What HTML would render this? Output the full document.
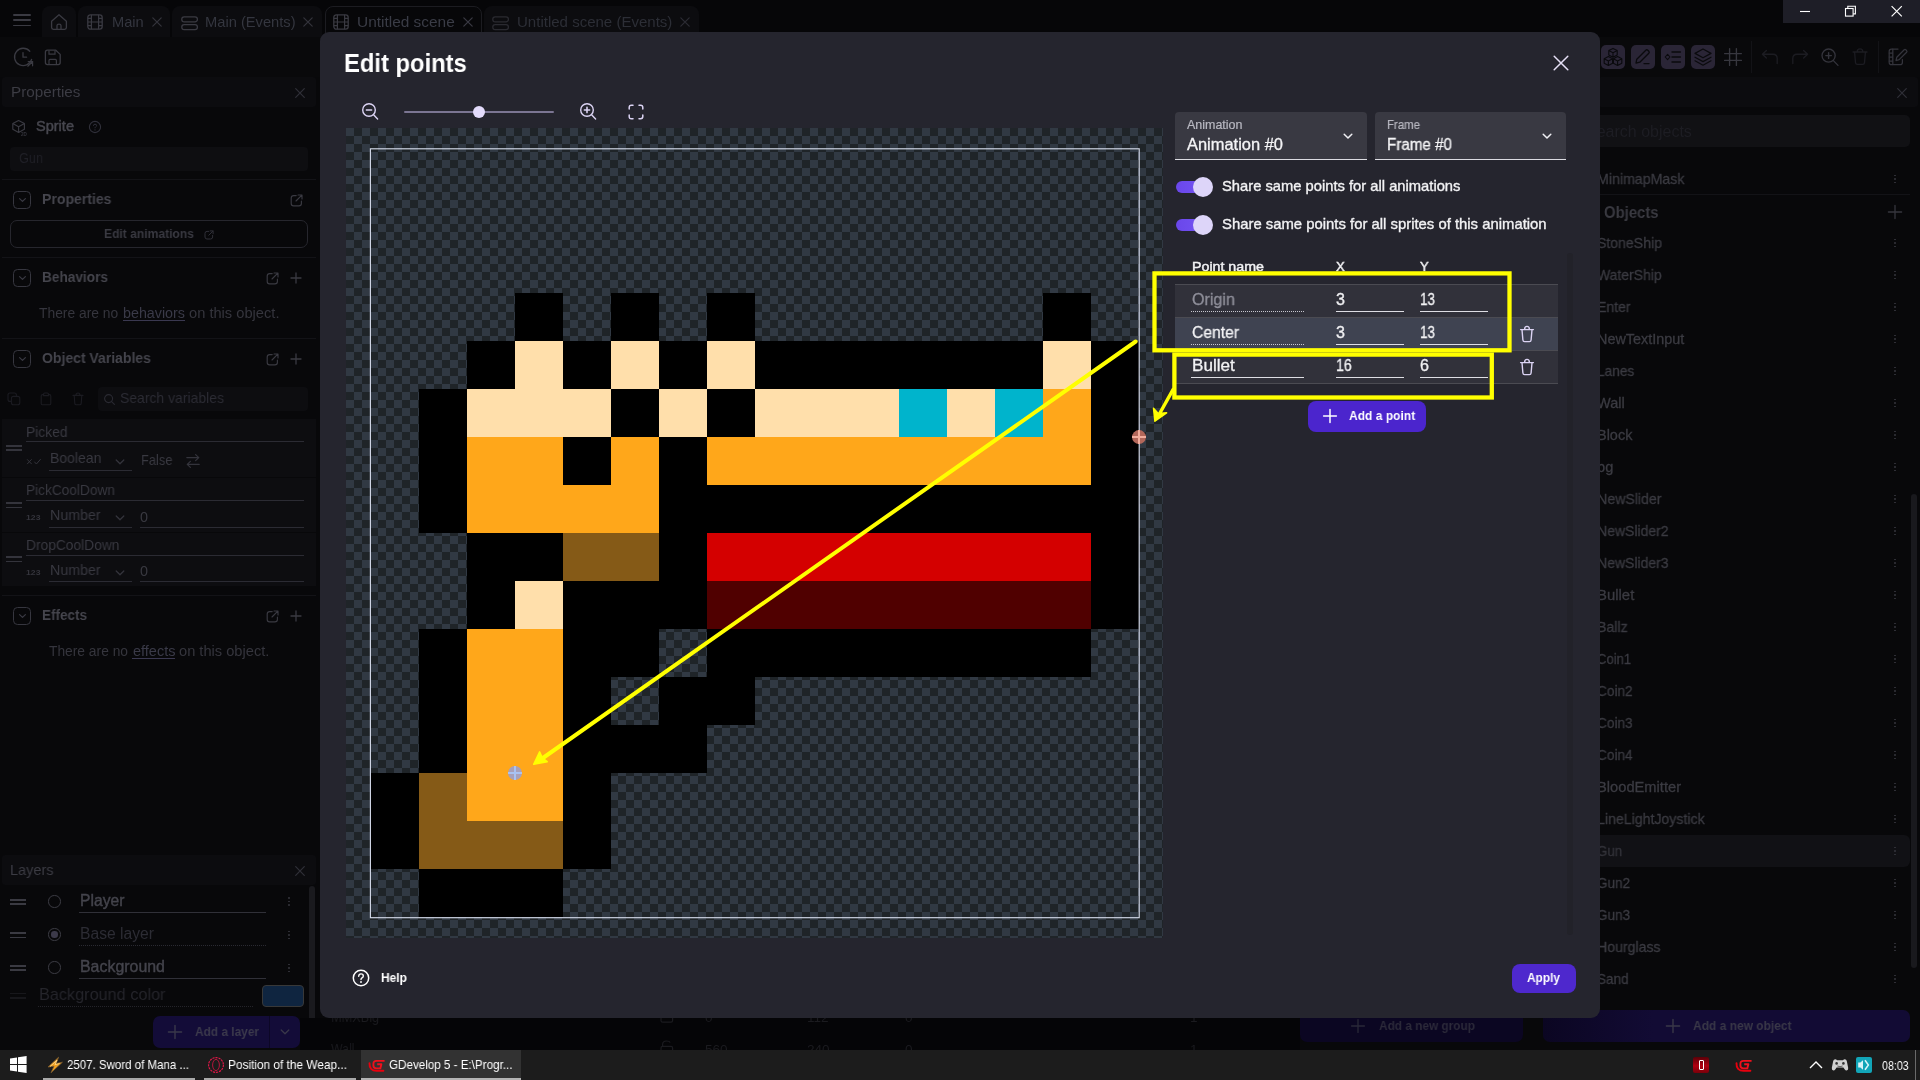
<!DOCTYPE html>
<html><head><meta charset="utf-8"><title>GDevelop 5</title>
<style>
html,body{margin:0;padding:0;}
body{width:1920px;height:1080px;overflow:hidden;background:#08080a;position:relative;font-family:"Liberation Sans",sans-serif;}
.a{position:absolute;display:block;}
.t{position:absolute;display:block;white-space:nowrap;line-height:1;transform-origin:0 50%;will-change:transform;}
</style></head>
<body>
<div class="a" style="left:0px;top:0px;width:1920px;height:38px;background:#060608;"></div>
<div class="a" style="left:0px;top:37px;width:1920px;height:40px;background:#09090b;"></div>
<div class="a" style="left:13px;top:14.0px;width:18px;height:1.5px;background:#3a3a42;border-radius:1px;"></div>
<div class="a" style="left:13px;top:19.4px;width:18px;height:1.5px;background:#3a3a42;border-radius:1px;"></div>
<div class="a" style="left:13px;top:24.6px;width:18px;height:1.5px;background:#3a3a42;border-radius:1px;"></div>
<div class="a" style="left:42px;top:6px;width:34px;height:31px;background:#0c0c0f;border-radius:8px 8px 0 0;"></div>
<div class="a" style="left:78px;top:6px;width:92px;height:31px;background:#0c0c0f;border-radius:8px 8px 0 0;"></div>
<div class="a" style="left:172px;top:6px;width:150px;height:31px;background:#0c0c0f;border-radius:8px 8px 0 0;"></div>
<div class="a" style="left:324.5px;top:6px;width:157px;height:34px;background:#070709;border-radius:8px 8px 0 0;border:1px solid #1c1c21;box-sizing:border-box;"></div>
<div class="a" style="left:483.5px;top:6px;width:215px;height:31px;background:#0c0c0f;border-radius:8px 8px 0 0;"></div>
<svg class="a" style="left:50px;top:13px;" width="18" height="18" viewBox="0 0 18 18"><path d="M1.6 8.2L9 1.8L16.4 8.2V14.6Q16.4 16.4 14.6 16.4H3.4Q1.6 16.4 1.6 14.6Z" fill="none" stroke="#3a3a42" stroke-width="1.3" stroke-linejoin="round"/><path d="M7 16.2V12.6Q7 11.2 9 11.2Q11 11.2 11 12.6V16.2" fill="none" stroke="#3a3a42" stroke-width="1.3"/></svg>
<svg class="a" style="left:87px;top:14.3px;" width="16" height="16" viewBox="0 0 16 16"><rect x="0.8" y="0.8" width="14.4" height="14.4" rx="2.6" fill="none" stroke="#3a3a42" stroke-width="1.3"/><path d="M4.4 0.8V15.2M11.6 0.8V15.2M0.8 8H15.2M0.8 4.4H4.4M0.8 11.6H4.4M11.6 4.4H15.2M11.6 11.6H15.2" stroke="#3a3a42" stroke-width="1.2" fill="none"/></svg>
<span class="t" style="left:111.60px;top:15.00px;font-size:14.2px;color:#34363f;transform:scaleX(1.0332);">Main</span>
<svg class="a" style="left:148.6px;top:14.399999999999999px;" width="16" height="16" viewBox="0 0 16 16"><path d="M3.8 3.8L12.2 12.2M12.2 3.8L3.8 12.2" stroke="#34343c" stroke-width="1.2" stroke-linecap="round"/></svg>
<svg class="a" style="left:181px;top:15.6px;" width="18" height="15" viewBox="0 0 18 15"><rect x="0.8" y="0.8" width="15.6" height="5" rx="2.4" fill="none" stroke="#3a3a42" stroke-width="1.3"/><rect x="0.8" y="8.6" width="15.6" height="5" rx="2.4" fill="none" stroke="#3a3a42" stroke-width="1.3"/></svg>
<span class="t" style="left:205.30px;top:15.00px;font-size:14.2px;color:#34363f;transform:scaleX(1.0343);">Main (Events)</span>
<svg class="a" style="left:300.4px;top:14.399999999999999px;" width="16" height="16" viewBox="0 0 16 16"><path d="M3.8 3.8L12.2 12.2M12.2 3.8L3.8 12.2" stroke="#34343c" stroke-width="1.2" stroke-linecap="round"/></svg>
<svg class="a" style="left:333px;top:14.3px;" width="16" height="16" viewBox="0 0 16 16"><rect x="0.8" y="0.8" width="14.4" height="14.4" rx="2.6" fill="none" stroke="#3a3a42" stroke-width="1.3"/><path d="M4.4 0.8V15.2M11.6 0.8V15.2M0.8 8H15.2M0.8 4.4H4.4M0.8 11.6H4.4M11.6 4.4H15.2M11.6 11.6H15.2" stroke="#3a3a42" stroke-width="1.2" fill="none"/></svg>
<span class="t" style="left:357.00px;top:15.00px;font-size:14.2px;color:#3a3c46;transform:scaleX(1.0868);">Untitled scene</span>
<svg class="a" style="left:459.5px;top:14.2px;" width="16" height="16" viewBox="0 0 16 16"><path d="M3.8 3.8L12.2 12.2M12.2 3.8L3.8 12.2" stroke="#3a3a44" stroke-width="1.2" stroke-linecap="round"/></svg>
<svg class="a" style="left:492px;top:15.6px;" width="18" height="15" viewBox="0 0 18 15"><rect x="0.8" y="0.8" width="15.6" height="5" rx="2.4" fill="none" stroke="#2a2a30" stroke-width="1.3"/><rect x="0.8" y="8.6" width="15.6" height="5" rx="2.4" fill="none" stroke="#2a2a30" stroke-width="1.3"/></svg>
<span class="t" style="left:516.50px;top:15.00px;font-size:14.2px;color:#2c2e36;transform:scaleX(1.0592);">Untitled scene (Events)</span>
<svg class="a" style="left:676.6px;top:14.2px;" width="16" height="16" viewBox="0 0 16 16"><path d="M3.8 3.8L12.2 12.2M12.2 3.8L3.8 12.2" stroke="#2c2c34" stroke-width="1.2" stroke-linecap="round"/></svg>
<svg class="a" style="left:12px;top:46px;" width="24" height="22" viewBox="0 0 24 22"><path d="M19.6 13.4A8.7 8.7 0 1 1 17.8 5.2" fill="none" stroke="#3a3a42" stroke-width="1.3" stroke-linecap="round"/><path d="M11 6.6V11.2H14.6" fill="none" stroke="#3a3a42" stroke-width="1.3" stroke-linecap="round" stroke-linejoin="round"/><path d="M16.2 15.6H20.6V19.8M20.4 15.8L15.8 20.2" fill="none" stroke="#3a3a42" stroke-width="1.2" stroke-linecap="round"/></svg>
<svg class="a" style="left:44px;top:49px;" width="18" height="17" viewBox="0 0 18 17"><path d="M1.4 3.2Q1.4 1.2 3.4 1.2H11.8L16.2 5.4V13.6Q16.2 15.6 14.2 15.6H3.4Q1.4 15.6 1.4 13.6Z" fill="none" stroke="#3a3a42" stroke-width="1.3" stroke-linejoin="round"/><path d="M5 1.4V5.2H11V1.6M5 15.4V11.4Q5 10.4 6 10.4H11.4Q12.4 10.4 12.4 11.4V15.4" fill="none" stroke="#3a3a42" stroke-width="1.2"/></svg>
<div class="a" style="left:2px;top:77px;width:314px;height:30px;background:#0c0c0f;border-radius:3px;"></div>
<span class="t" style="left:10.50px;top:85.00px;font-size:14.4px;color:#3c3c44;transform:scaleX(1.0591);">Properties</span>
<svg class="a" style="left:292px;top:85px;" width="16" height="16" viewBox="0 0 16 16"><path d="M3.7 3.7L12.3 12.3M12.3 3.7L3.7 12.3" stroke="#303038" stroke-width="1.2" stroke-linecap="round"/></svg>
<svg class="a" style="left:11px;top:119px;" width="18" height="17" viewBox="0 0 18 17"><path d="M7.6 1.6L13.4 4.6V10.2L7.6 13.4L1.8 10.2V4.6ZM1.8 4.6L7.6 7.8L13.4 4.6M7.6 7.8V13.4" fill="none" stroke="#3a3a42" stroke-width="1.15" stroke-linejoin="round"/></svg>
<span class="t" style="left:20.50px;top:133.00px;font-size:4.6px;color:#34343c;font-weight:bold;">2D</span>
<span class="t" style="left:36.00px;top:119.00px;font-size:14.2px;color:#47474f;transform:scaleX(1.0244);-webkit-text-stroke:0.45px #47474f;">Sprite</span>
<svg class="a" style="left:88px;top:120px;" width="14" height="14" viewBox="0 0 14 14"><circle cx="7" cy="7" r="5.6" fill="none" stroke="#30303a" stroke-width="1.1"/><path d="M5.4 5.8Q5.5 4.2 7 4.2Q8.6 4.2 8.6 5.6Q8.6 6.4 7.7 6.9Q7 7.3 7 8.2" fill="none" stroke="#30303a" stroke-width="1"/><circle cx="7" cy="9.9" r="0.65" fill="#30303a"/></svg>
<div class="a" style="left:10px;top:147.3px;width:298px;height:23.4px;background:#0e0e11;border-radius:4px;"></div>
<span class="t" style="left:18.50px;top:151.00px;font-size:14.2px;color:#202027;transform:scaleX(0.8941);">Gun</span>
<div class="a" style="left:2px;top:179px;width:314px;height:1px;background:#131317;"></div>
<div class="a" style="left:13px;top:191px;width:18px;height:18px;border-radius:4.5px;border:1.3px solid #36363f;box-sizing:border-box;"></div>
<svg class="a" style="left:17.5px;top:196px;" width="9" height="8" viewBox="0 0 9 8"><path d="M1.6 2.6L4.5 5.4L7.4 2.6" fill="none" stroke="#3a3a44" stroke-width="1.2" stroke-linecap="round" stroke-linejoin="round"/></svg>
<span class="t" style="left:42.00px;top:192.00px;font-size:14.2px;color:#45454d;font-weight:bold;transform:scaleX(0.9895);">Properties</span>
<svg class="a" style="left:289.5px;top:193.5px;" width="13" height="13" viewBox="0 0 13 13"><path d="M6.2 1.6H3.6Q1.2 1.6 1.2 4V9.4Q1.2 11.8 3.6 11.8H9Q11.4 11.8 11.4 9.4V7" fill="none" stroke="#3a3a42" stroke-width="1.15" stroke-linecap="round"/><path d="M6 7L11.8 1.2M8 1H12V5" fill="none" stroke="#3a3a42" stroke-width="1.15" stroke-linecap="round" stroke-linejoin="round"/></svg>
<div class="a" style="left:10px;top:220.3px;width:298px;height:28px;border-radius:7px;border:1px solid #26262d;box-sizing:border-box;"></div>
<span class="t" style="left:103.50px;top:228.00px;font-size:12.6px;color:#3a3a42;font-weight:bold;transform:scaleX(0.9593);">Edit animations</span>
<svg class="a" style="left:203.8px;top:229.6px;" width="10" height="10" viewBox="0 0 10 10"><path d="M4.8 1.4H3Q1 1.4 1 3.4V7Q1 9 3 9H6.6Q8.6 9 8.6 7V5.4" fill="none" stroke="#303038" stroke-width="1" stroke-linecap="round"/><path d="M4.8 5.2L9 1M6.2 0.9H9.1V3.8" fill="none" stroke="#303038" stroke-width="1" stroke-linecap="round" stroke-linejoin="round"/></svg>
<div class="a" style="left:2px;top:257px;width:314px;height:1px;background:#131317;"></div>
<div class="a" style="left:13px;top:269.2px;width:18px;height:18px;border-radius:4.5px;border:1.3px solid #36363f;box-sizing:border-box;"></div>
<svg class="a" style="left:17.5px;top:274.2px;" width="9" height="8" viewBox="0 0 9 8"><path d="M1.6 2.6L4.5 5.4L7.4 2.6" fill="none" stroke="#3a3a44" stroke-width="1.2" stroke-linecap="round" stroke-linejoin="round"/></svg>
<span class="t" style="left:42.00px;top:270.00px;font-size:14.2px;color:#45454d;font-weight:bold;transform:scaleX(0.9612);">Behaviors</span>
<svg class="a" style="left:265.5px;top:271.5px;" width="13" height="13" viewBox="0 0 13 13"><path d="M6.2 1.6H3.6Q1.2 1.6 1.2 4V9.4Q1.2 11.8 3.6 11.8H9Q11.4 11.8 11.4 9.4V7" fill="none" stroke="#3a3a42" stroke-width="1.15" stroke-linecap="round"/><path d="M6 7L11.8 1.2M8 1H12V5" fill="none" stroke="#3a3a42" stroke-width="1.15" stroke-linecap="round" stroke-linejoin="round"/></svg>
<svg class="a" style="left:288px;top:270px;" width="16" height="16" viewBox="0 0 16 16"><path d="M8 3V13M3 8H13" stroke="#3a3a42" stroke-width="1.3" stroke-linecap="round"/></svg>
<span class="t" style="left:39.00px;top:307.00px;font-size:13.8px;color:#35353d;transform:scaleX(1.0035);">There are no</span>
<span class="t" style="left:122.70px;top:307.00px;font-size:13.8px;color:#3a3a48;transform:scaleX(1.0361);">behaviors</span>
<span class="t" style="left:188.70px;top:307.00px;font-size:13.8px;color:#35353d;transform:scaleX(1.0627);">on this object.</span>
<div class="a" style="left:122.5px;top:319.8px;width:62.5px;height:1px;background:#3a3850;"></div>
<div class="a" style="left:2px;top:338px;width:314px;height:1px;background:#131317;"></div>
<div class="a" style="left:13px;top:350.2px;width:18px;height:18px;border-radius:4.5px;border:1.3px solid #36363f;box-sizing:border-box;"></div>
<svg class="a" style="left:17.5px;top:355.2px;" width="9" height="8" viewBox="0 0 9 8"><path d="M1.6 2.6L4.5 5.4L7.4 2.6" fill="none" stroke="#3a3a44" stroke-width="1.2" stroke-linecap="round" stroke-linejoin="round"/></svg>
<span class="t" style="left:42.00px;top:351.00px;font-size:14.2px;color:#45454d;font-weight:bold;transform:scaleX(0.9863);">Object Variables</span>
<svg class="a" style="left:265.5px;top:352.5px;" width="13" height="13" viewBox="0 0 13 13"><path d="M6.2 1.6H3.6Q1.2 1.6 1.2 4V9.4Q1.2 11.8 3.6 11.8H9Q11.4 11.8 11.4 9.4V7" fill="none" stroke="#3a3a42" stroke-width="1.15" stroke-linecap="round"/><path d="M6 7L11.8 1.2M8 1H12V5" fill="none" stroke="#3a3a42" stroke-width="1.15" stroke-linecap="round" stroke-linejoin="round"/></svg>
<svg class="a" style="left:288px;top:351px;" width="16" height="16" viewBox="0 0 16 16"><path d="M8 3V13M3 8H13" stroke="#3a3a42" stroke-width="1.3" stroke-linecap="round"/></svg>
<svg class="a" style="left:7px;top:392px;" width="14" height="14" viewBox="0 0 14 14"><rect x="1" y="1" width="8.4" height="8.4" rx="2" fill="none" stroke="#1b1b21" stroke-width="1.1"/><rect x="4.4" y="4.4" width="8.4" height="8.4" rx="2" fill="#09090b" stroke="#1b1b21" stroke-width="1.1"/></svg>
<svg class="a" style="left:40px;top:392px;" width="12" height="14" viewBox="0 0 12 14"><path d="M3.4 2.6H2.6Q1.2 2.6 1.2 4V11.4Q1.2 12.8 2.6 12.8H9.4Q10.8 12.8 10.8 11.4V4Q10.8 2.6 9.4 2.6H8.6M3.6 3.6V2Q3.6 1 4.6 1H7.4Q8.4 1 8.4 2V3.6Z" fill="none" stroke="#1b1b21" stroke-width="1.1"/></svg>
<svg class="a" style="left:72px;top:392px;" width="12" height="14" viewBox="0 0 12 14"><path d="M1 3.4H11M4 3.2Q4 1 6 1Q8 1 8 3.2M2.2 3.6L2.8 11.4Q2.9 12.8 4.2 12.8H7.8Q9.1 12.8 9.2 11.4L9.8 3.6" fill="none" stroke="#1b1b21" stroke-width="1.1" stroke-linecap="round"/></svg>
<div class="a" style="left:98px;top:387.3px;width:210px;height:23.7px;background:#0d0d10;border-radius:4px;"></div>
<svg class="a" style="left:103px;top:393px;" width="13" height="13" viewBox="0 0 13 13"><circle cx="5.6" cy="5.6" r="4" fill="none" stroke="#2a2a32" stroke-width="1.1"/><path d="M8.6 8.6L11.4 11.4" stroke="#2a2a32" stroke-width="1.1" stroke-linecap="round"/></svg>
<span class="t" style="left:120.00px;top:391.00px;font-size:14.6px;color:#2c2c34;transform:scaleX(0.9565);">Search variables</span>
<div class="a" style="left:2px;top:419px;width:314px;height:58px;background:#0d0d10;"></div>
<div class="a" style="left:2px;top:478px;width:314px;height:54.4px;background:#0d0d10;"></div>
<div class="a" style="left:2px;top:533.3px;width:314px;height:53px;background:#0d0d10;"></div>
<span class="t" style="left:26.00px;top:425.00px;font-size:14.4px;color:#393941;transform:scaleX(0.9602);">Picked</span>
<div class="a" style="left:26px;top:441px;width:278px;height:1px;background:#2b2b33;"></div>
<div class="a" style="left:6px;top:445.1px;width:16px;height:1.5px;background:#34343c;"></div>
<div class="a" style="left:6px;top:449.3px;width:16px;height:1.5px;background:#34343c;"></div>
<svg class="a" style="left:25.5px;top:458px;" width="16" height="8" viewBox="0 0 16 8"><path d="M1.4 1.6L5.4 5.8M5.4 1.6L1.4 5.8M8.6 4L10.4 6L14.4 1.4" fill="none" stroke="#33333b" stroke-width="1" stroke-linecap="round" stroke-linejoin="round"/></svg>
<span class="t" style="left:49.50px;top:451.00px;font-size:14.4px;color:#393941;transform:scaleX(0.9746);">Boolean</span>
<svg class="a" style="left:114px;top:456.5px;" width="12" height="10" viewBox="0 0 12 10"><path d="M2.2 3L6 6.8L9.8 3" fill="none" stroke="#34343c" stroke-width="1.25" stroke-linecap="round" stroke-linejoin="round"/></svg>
<div class="a" style="left:49px;top:470px;width:83px;height:1px;background:#2b2b33;"></div>
<span class="t" style="left:140.50px;top:453.00px;font-size:14.4px;color:#393941;transform:scaleX(0.8947);">False</span>
<svg class="a" style="left:185px;top:453px;" width="16" height="16" viewBox="0 0 16 16"><path d="M1.8 4.6H13.6M10.6 1.6L13.8 4.6L10.6 7.6M14.2 11.4H2.4M5.4 8.4L2.2 11.4L5.4 14.4" fill="none" stroke="#34343c" stroke-width="1.2" stroke-linecap="round" stroke-linejoin="round"/></svg>
<span class="t" style="left:26.00px;top:483.00px;font-size:14.4px;color:#393941;transform:scaleX(0.9505);">PickCoolDown</span>
<div class="a" style="left:26px;top:499.9px;width:278px;height:1px;background:#2b2b33;"></div>
<div class="a" style="left:6px;top:502.1px;width:16px;height:1.5px;background:#34343c;"></div>
<div class="a" style="left:6px;top:506.6px;width:16px;height:1.5px;background:#34343c;"></div>
<span class="t" style="left:26.00px;top:514.00px;font-size:7.4px;color:#34343c;font-weight:bold;transform:scaleX(1.1742);">123</span>
<span class="t" style="left:49.50px;top:508.00px;font-size:14.4px;color:#393941;transform:scaleX(0.9861);">Number</span>
<svg class="a" style="left:114px;top:513.1px;" width="12" height="10" viewBox="0 0 12 10"><path d="M2.2 3L6 6.8L9.8 3" fill="none" stroke="#34343c" stroke-width="1.25" stroke-linecap="round" stroke-linejoin="round"/></svg>
<div class="a" style="left:49px;top:527px;width:83px;height:1px;background:#2b2b33;"></div>
<span class="t" style="left:140.00px;top:510.00px;font-size:14.4px;color:#393941;transform:scaleX(0.9991);">0</span>
<div class="a" style="left:140px;top:527px;width:164px;height:1px;background:#2b2b33;"></div>
<span class="t" style="left:26.00px;top:538.00px;font-size:14.4px;color:#393941;transform:scaleX(0.9576);">DropCoolDown</span>
<div class="a" style="left:26px;top:554.9px;width:278px;height:1px;background:#2b2b33;"></div>
<div class="a" style="left:6px;top:556.3px;width:16px;height:1.5px;background:#34343c;"></div>
<div class="a" style="left:6px;top:560.5999999999999px;width:16px;height:1.5px;background:#34343c;"></div>
<span class="t" style="left:26.00px;top:569.00px;font-size:7.4px;color:#34343c;font-weight:bold;transform:scaleX(1.1742);">123</span>
<span class="t" style="left:49.50px;top:563.00px;font-size:14.4px;color:#393941;transform:scaleX(0.9861);">Number</span>
<svg class="a" style="left:114px;top:568.1px;" width="12" height="10" viewBox="0 0 12 10"><path d="M2.2 3L6 6.8L9.8 3" fill="none" stroke="#34343c" stroke-width="1.25" stroke-linecap="round" stroke-linejoin="round"/></svg>
<div class="a" style="left:49px;top:581.2px;width:83px;height:1px;background:#2b2b33;"></div>
<span class="t" style="left:140.00px;top:564.00px;font-size:14.4px;color:#393941;transform:scaleX(0.9991);">0</span>
<div class="a" style="left:140px;top:581.2px;width:164px;height:1px;background:#2b2b33;"></div>
<div class="a" style="left:2px;top:595px;width:314px;height:1px;background:#131317;"></div>
<div class="a" style="left:13px;top:607px;width:18px;height:18px;border-radius:4.5px;border:1.3px solid #36363f;box-sizing:border-box;"></div>
<svg class="a" style="left:17.5px;top:612px;" width="9" height="8" viewBox="0 0 9 8"><path d="M1.6 2.6L4.5 5.4L7.4 2.6" fill="none" stroke="#3a3a44" stroke-width="1.2" stroke-linecap="round" stroke-linejoin="round"/></svg>
<span class="t" style="left:42.00px;top:608.00px;font-size:14.2px;color:#45454d;font-weight:bold;transform:scaleX(0.9503);">Effects</span>
<svg class="a" style="left:265.5px;top:609.5px;" width="13" height="13" viewBox="0 0 13 13"><path d="M6.2 1.6H3.6Q1.2 1.6 1.2 4V9.4Q1.2 11.8 3.6 11.8H9Q11.4 11.8 11.4 9.4V7" fill="none" stroke="#3a3a42" stroke-width="1.15" stroke-linecap="round"/><path d="M6 7L11.8 1.2M8 1H12V5" fill="none" stroke="#3a3a42" stroke-width="1.15" stroke-linecap="round" stroke-linejoin="round"/></svg>
<svg class="a" style="left:288px;top:608px;" width="16" height="16" viewBox="0 0 16 16"><path d="M8 3V13M3 8H13" stroke="#3a3a42" stroke-width="1.3" stroke-linecap="round"/></svg>
<span class="t" style="left:49.20px;top:645.00px;font-size:13.8px;color:#35353d;transform:scaleX(0.9972);">There are no</span>
<span class="t" style="left:132.50px;top:645.00px;font-size:13.8px;color:#3a3a48;transform:scaleX(1.0519);">effects</span>
<span class="t" style="left:178.80px;top:645.00px;font-size:13.8px;color:#35353d;transform:scaleX(1.0615);">on this object.</span>
<div class="a" style="left:132.3px;top:657.6px;width:43px;height:1px;background:#3a3850;"></div>
<div class="a" style="left:2px;top:854.6px;width:314px;height:30.4px;background:#0c0c0f;border-radius:3px;"></div>
<span class="t" style="left:10.00px;top:862.00px;font-size:15px;color:#3c3c44;transform:scaleX(0.9661);">Layers</span>
<svg class="a" style="left:292px;top:863px;" width="16" height="16" viewBox="0 0 16 16"><path d="M3.7 3.7L12.3 12.3M12.3 3.7L3.7 12.3" stroke="#303038" stroke-width="1.2" stroke-linecap="round"/></svg>
<div class="a" style="left:309.2px;top:886.4px;width:5.6px;height:156.4px;background:#1a1a1e;border-radius:3px;"></div>
<div class="a" style="left:10px;top:899.0px;width:16px;height:1.5px;background:#3a3a42;"></div>
<div class="a" style="left:10px;top:903.4px;width:16px;height:1.5px;background:#3a3a42;"></div>
<div class="a" style="left:48.3px;top:895.3px;width:12.4px;height:12.4px;border-radius:50%;border:1.2px solid #3a3a42;box-sizing:border-box;"></div>
<span class="t" style="left:79.50px;top:893.00px;font-size:15.6px;color:#44444c;transform:scaleX(1.0063);-webkit-text-stroke:0.4px #44444c;">Player</span>
<div class="a" style="left:79px;top:912.2px;width:187px;height:1px;background:#303038;"></div>
<div class="a" style="left:288.2px;top:897.2px;width:1.6px;height:1.6px;background:#34343c;border-radius:1px;"></div>
<div class="a" style="left:288.2px;top:900.8000000000001px;width:1.6px;height:1.6px;background:#34343c;border-radius:1px;"></div>
<div class="a" style="left:288.2px;top:904.4000000000001px;width:1.6px;height:1.6px;background:#34343c;border-radius:1px;"></div>
<div class="a" style="left:10px;top:932.1999999999999px;width:16px;height:1.5px;background:#3a3a42;"></div>
<div class="a" style="left:10px;top:936.6999999999999px;width:16px;height:1.5px;background:#3a3a42;"></div>
<div class="a" style="left:48.3px;top:928.4px;width:12.4px;height:12.4px;border-radius:50%;border:1.2px solid #3a3a42;box-sizing:border-box;"></div>
<div class="a" style="left:51.3px;top:931.4px;width:6.4px;height:6.4px;border-radius:50%;background:#3c3a4a;"></div>
<span class="t" style="left:79.50px;top:926.00px;font-size:15.6px;color:#2c2c34;transform:scaleX(1.0040);">Base layer</span>
<div class="a" style="left:79px;top:945px;width:187px;height:1px;background-image:linear-gradient(90deg,#2a2a32 50%,transparent 0);background-size:2px 1px;"></div>
<div class="a" style="left:288.2px;top:930.6px;width:1.6px;height:1.6px;background:#34343c;border-radius:1px;"></div>
<div class="a" style="left:288.2px;top:934.2px;width:1.6px;height:1.6px;background:#34343c;border-radius:1px;"></div>
<div class="a" style="left:288.2px;top:937.8000000000001px;width:1.6px;height:1.6px;background:#34343c;border-radius:1px;"></div>
<div class="a" style="left:10px;top:965.0px;width:16px;height:1.5px;background:#3a3a42;"></div>
<div class="a" style="left:10px;top:969.4px;width:16px;height:1.5px;background:#3a3a42;"></div>
<div class="a" style="left:48.3px;top:961.4px;width:12.4px;height:12.4px;border-radius:50%;border:1.2px solid #3a3a42;box-sizing:border-box;"></div>
<span class="t" style="left:79.50px;top:959.00px;font-size:15.6px;color:#44444c;transform:scaleX(1.0209);-webkit-text-stroke:0.4px #44444c;">Background</span>
<div class="a" style="left:79px;top:977.6px;width:187px;height:1px;background:#303038;"></div>
<div class="a" style="left:288.2px;top:963.6px;width:1.6px;height:1.6px;background:#34343c;border-radius:1px;"></div>
<div class="a" style="left:288.2px;top:967.2px;width:1.6px;height:1.6px;background:#34343c;border-radius:1px;"></div>
<div class="a" style="left:288.2px;top:970.8000000000001px;width:1.6px;height:1.6px;background:#34343c;border-radius:1px;"></div>
<div class="a" style="left:10px;top:992.5px;width:16px;height:1.5px;background:#17171b;"></div>
<div class="a" style="left:10px;top:997.0999999999999px;width:16px;height:1.5px;background:#17171b;"></div>
<span class="t" style="left:38.50px;top:987.00px;font-size:16.6px;color:#25252b;transform:scaleX(0.9792);">Background color</span>
<div class="a" style="left:38px;top:1006px;width:216px;height:1px;background-image:linear-gradient(90deg,#24242a 50%,transparent 0);background-size:2px 1px;"></div>
<div class="a" style="left:262px;top:985px;width:41.7px;height:22px;background:#0f2540;border-radius:4px;border:1.4px solid #383838;box-sizing:border-box;"></div>
<div class="a" style="left:152.8px;top:1016px;width:147.2px;height:31.8px;background:#130c38;border-radius:7px;"></div>
<div class="a" style="left:269px;top:1016px;width:1px;height:31.8px;background:#0c0726;"></div>
<svg class="a" style="left:167px;top:1024px;" width="16" height="16" viewBox="0 0 16 16"><path d="M8 1.4000000000000004V14.6M1.4000000000000004 8H14.6" stroke="#3a384a" stroke-width="1.4" stroke-linecap="round"/></svg>
<span class="t" style="left:194.50px;top:1026.00px;font-size:12.8px;color:#3c3a4c;font-weight:bold;transform:scaleX(0.9275);">Add a layer</span>
<svg class="a" style="left:278.5px;top:1027.4px;" width="12" height="10" viewBox="0 0 12 10"><path d="M2.2 3L6 6.8L9.8 3" fill="none" stroke="#3a384a" stroke-width="1.25" stroke-linecap="round" stroke-linejoin="round"/></svg>
<div class="a" style="left:1601px;top:44.8px;width:24px;height:24px;background:#2a2536;border-radius:5px;"></div>
<div class="a" style="left:1631px;top:44.8px;width:24px;height:24px;background:#2a2536;border-radius:5px;"></div>
<div class="a" style="left:1661px;top:44.8px;width:24px;height:24px;background:#2a2536;border-radius:5px;"></div>
<div class="a" style="left:1691px;top:44.8px;width:24px;height:24px;background:#2a2536;border-radius:5px;"></div>
<svg class="a" style="left:1603px;top:47px;" width="20" height="20" viewBox="0 0 20 20"><g fill="none" stroke="#0a0a0d" stroke-width="1.15" stroke-linejoin="round"><path d="M10 1.4L14.2 3.6V8L10 10.2L5.8 8V3.6ZM5.8 3.6L10 5.8L14.2 3.6M10 5.8V10.2"/><path d="M5.4 9.6L9.6 11.8V16.2L5.4 18.4L1.2 16.2V11.8ZM1.2 11.8L5.4 14L9.6 11.8M5.4 14V18.4"/><path d="M14.6 9.6L18.8 11.8V16.2L14.6 18.4L10.4 16.2V11.8ZM10.4 11.8L14.6 14L18.8 11.8M14.6 14V18.4"/></g></svg>
<svg class="a" style="left:1633px;top:47px;" width="20" height="20" viewBox="0 0 20 20"><g fill="none" stroke="#0a0a0d" stroke-width="1.3" stroke-linejoin="round" stroke-linecap="round"><path d="M3 16.2L3.8 12.2L12.8 3.2Q13.8 2.2 14.8 3.2L15.8 4.2Q16.8 5.2 15.8 6.2L6.8 15.2Z"/><path d="M11 16.6H16"/></g></svg>
<svg class="a" style="left:1663px;top:47px;" width="20" height="20" viewBox="0 0 20 20"><g fill="none" stroke="#0a0a0d" stroke-width="1.4" stroke-linecap="round"><path d="M9 5H17.4M9 10H17.4M9 15H17.4"/><path d="M4.6 7.4L7 10L4.6 12.6L2.2 10Z" stroke-width="1.1" stroke-linejoin="round"/></g></svg>
<svg class="a" style="left:1693px;top:47px;" width="20" height="20" viewBox="0 0 20 20"><g fill="none" stroke="#0a0a0d" stroke-width="1.25" stroke-linejoin="round" stroke-linecap="round"><path d="M10 2L18 6.4L10 10.8L2 6.4Z"/><path d="M2 10.2L10 14.6L18 10.2"/><path d="M2 13.8L10 18.2L18 13.8"/></g></svg>
<svg class="a" style="left:1723px;top:47px;" width="20" height="20" viewBox="0 0 20 20"><path d="M6.6 1.6V18.4M13.4 1.6V18.4M1.6 6.6H18.4M1.6 13.4H18.4" stroke="#37373f" stroke-width="1.35" stroke-linecap="round"/></svg>
<div class="a" style="left:1751px;top:41px;width:1px;height:32px;background:#131317;"></div>
<svg class="a" style="left:1760px;top:48px;" width="20" height="18" viewBox="0 0 20 18"><path d="M6.4 2.4L2.4 6.2L6.4 10M2.8 6.2H13Q17.2 6.2 17.2 10.4V15.6" fill="none" stroke="#1c1c22" stroke-width="1.35" stroke-linecap="round" stroke-linejoin="round"/></svg>
<svg class="a" style="left:1790px;top:48px;" width="20" height="18" viewBox="0 0 20 18"><path d="M13.6 2.4L17.6 6.2L13.6 10M17.2 6.2H7Q2.8 6.2 2.8 10.4V15.6" fill="none" stroke="#1c1c22" stroke-width="1.35" stroke-linecap="round" stroke-linejoin="round"/></svg>
<svg class="a" style="left:1820px;top:47px;" width="20" height="20" viewBox="0 0 20 20"><circle cx="8.6" cy="8.6" r="6.6" fill="none" stroke="#34343c" stroke-width="1.3"/><path d="M13.4 13.6L18 18.4" stroke="#34343c" stroke-width="1.3" stroke-linecap="round"/><path d="M5.8 8.6H11.4M8.6 5.8V11.4" stroke="#34343c" stroke-width="1.4" stroke-linecap="round"/></svg>
<svg class="a" style="left:1851px;top:47px;" width="18" height="20" viewBox="0 0 18 20"><path d="M2 5H16M6.2 4.8Q6.2 1.8 9 1.8Q11.8 1.8 11.8 4.8M3.6 5.2L4.5 15.6Q4.65 17.4 6.4 17.4H11.6Q13.35 17.4 13.5 15.6L14.4 5.2" fill="none" stroke="#1c1c22" stroke-width="1.3" stroke-linecap="round"/></svg>
<div class="a" style="left:1878px;top:41px;width:1px;height:32px;background:#131317;"></div>
<svg class="a" style="left:1887px;top:47px;" width="22" height="20" viewBox="0 0 22 20"><g fill="none" stroke="#34343c" stroke-width="1.25" stroke-linecap="round" stroke-linejoin="round"><path d="M11 2H4.4Q2.2 2 2.2 4.2V15.4Q2.2 17.6 4.4 17.6H13.2Q15.4 17.6 15.4 15.4V12.6"/><path d="M5.8 2V17.6M2.2 6H5.8M2.2 10H5.8M2.2 14H5.8"/><path d="M9 13.6L9.8 10.2L17.2 2.8Q18 2 18.8 2.8L19.6 3.6Q20.4 4.4 19.6 5.2L12.2 12.6Z"/></g></svg>
<div class="a" style="left:1598px;top:77px;width:320px;height:30px;background:#0c0c0f;border-radius:3px;"></div>
<svg class="a" style="left:1894px;top:85px;" width="16" height="16" viewBox="0 0 16 16"><path d="M3.7 3.7L12.3 12.3M12.3 3.7L3.7 12.3" stroke="#303038" stroke-width="1.2" stroke-linecap="round"/></svg>
<div class="a" style="left:1580px;top:115px;width:330px;height:31.7px;background:#111114;border-radius:5px;"></div>
<span class="t" style="left:1586.00px;top:124.00px;font-size:16px;color:#1d1d23;transform:scaleX(0.9968);">Search objects</span>
<span class="t" style="left:1597.30px;top:172.00px;font-size:14.4px;color:#3b3b42;transform:scaleX(0.9852);-webkit-text-stroke:0.3px #3b3b42;">MinimapMask</span>
<div class="a" style="left:1894.2px;top:174.6px;width:1.6px;height:1.6px;background:#34343c;border-radius:1px;"></div>
<div class="a" style="left:1894.2px;top:178.2px;width:1.6px;height:1.6px;background:#34343c;border-radius:1px;"></div>
<div class="a" style="left:1894.2px;top:181.79999999999998px;width:1.6px;height:1.6px;background:#34343c;border-radius:1px;"></div>
<div class="a" style="left:1598px;top:194.4px;width:312px;height:1px;background:#131317;"></div>
<span class="t" style="left:1604.00px;top:205.00px;font-size:16px;color:#393940;font-weight:bold;transform:scaleX(0.9286);">Objects</span>
<svg class="a" style="left:1887px;top:204px;" width="16" height="16" viewBox="0 0 16 16"><path d="M8 1.4000000000000004V14.6M1.4000000000000004 8H14.6" stroke="#36363e" stroke-width="1.3" stroke-linecap="round"/></svg>
<div class="a" style="left:1590px;top:835px;width:320px;height:31.7px;background:#111115;border-radius:6px;"></div>
<span class="t" style="left:1597.30px;top:236.00px;font-size:14.4px;color:#3b3b42;transform:scaleX(0.9783);-webkit-text-stroke:0.3px #3b3b42;">StoneShip</span>
<div class="a" style="left:1894.2px;top:238.6px;width:1.6px;height:1.6px;background:#34343c;border-radius:1px;"></div>
<div class="a" style="left:1894.2px;top:242.2px;width:1.6px;height:1.6px;background:#34343c;border-radius:1px;"></div>
<div class="a" style="left:1894.2px;top:245.79999999999998px;width:1.6px;height:1.6px;background:#34343c;border-radius:1px;"></div>
<span class="t" style="left:1597.30px;top:268.00px;font-size:14.4px;color:#3b3b42;transform:scaleX(0.9702);-webkit-text-stroke:0.3px #3b3b42;">WaterShip</span>
<div class="a" style="left:1894.2px;top:270.59999999999997px;width:1.6px;height:1.6px;background:#34343c;border-radius:1px;"></div>
<div class="a" style="left:1894.2px;top:274.2px;width:1.6px;height:1.6px;background:#34343c;border-radius:1px;"></div>
<div class="a" style="left:1894.2px;top:277.8px;width:1.6px;height:1.6px;background:#34343c;border-radius:1px;"></div>
<span class="t" style="left:1597.30px;top:300.00px;font-size:14.4px;color:#3b3b42;transform:scaleX(0.9793);-webkit-text-stroke:0.3px #3b3b42;">Enter</span>
<div class="a" style="left:1894.2px;top:302.59999999999997px;width:1.6px;height:1.6px;background:#34343c;border-radius:1px;"></div>
<div class="a" style="left:1894.2px;top:306.2px;width:1.6px;height:1.6px;background:#34343c;border-radius:1px;"></div>
<div class="a" style="left:1894.2px;top:309.8px;width:1.6px;height:1.6px;background:#34343c;border-radius:1px;"></div>
<span class="t" style="left:1597.30px;top:332.00px;font-size:14.4px;color:#3b3b42;transform:scaleX(0.9985);-webkit-text-stroke:0.3px #3b3b42;">NewTextInput</span>
<div class="a" style="left:1894.2px;top:334.59999999999997px;width:1.6px;height:1.6px;background:#34343c;border-radius:1px;"></div>
<div class="a" style="left:1894.2px;top:338.2px;width:1.6px;height:1.6px;background:#34343c;border-radius:1px;"></div>
<div class="a" style="left:1894.2px;top:341.8px;width:1.6px;height:1.6px;background:#34343c;border-radius:1px;"></div>
<span class="t" style="left:1597.30px;top:364.00px;font-size:14.4px;color:#3b3b42;transform:scaleX(0.9509);-webkit-text-stroke:0.3px #3b3b42;">Lanes</span>
<div class="a" style="left:1894.2px;top:366.59999999999997px;width:1.6px;height:1.6px;background:#34343c;border-radius:1px;"></div>
<div class="a" style="left:1894.2px;top:370.2px;width:1.6px;height:1.6px;background:#34343c;border-radius:1px;"></div>
<div class="a" style="left:1894.2px;top:373.8px;width:1.6px;height:1.6px;background:#34343c;border-radius:1px;"></div>
<span class="t" style="left:1597.30px;top:396.00px;font-size:14.4px;color:#3b3b42;transform:scaleX(1.0085);-webkit-text-stroke:0.3px #3b3b42;">Wall</span>
<div class="a" style="left:1894.2px;top:398.59999999999997px;width:1.6px;height:1.6px;background:#34343c;border-radius:1px;"></div>
<div class="a" style="left:1894.2px;top:402.2px;width:1.6px;height:1.6px;background:#34343c;border-radius:1px;"></div>
<div class="a" style="left:1894.2px;top:405.8px;width:1.6px;height:1.6px;background:#34343c;border-radius:1px;"></div>
<span class="t" style="left:1597.30px;top:428.00px;font-size:14.4px;color:#3b3b42;transform:scaleX(1.0053);-webkit-text-stroke:0.3px #3b3b42;">Block</span>
<div class="a" style="left:1894.2px;top:430.59999999999997px;width:1.6px;height:1.6px;background:#34343c;border-radius:1px;"></div>
<div class="a" style="left:1894.2px;top:434.2px;width:1.6px;height:1.6px;background:#34343c;border-radius:1px;"></div>
<div class="a" style="left:1894.2px;top:437.8px;width:1.6px;height:1.6px;background:#34343c;border-radius:1px;"></div>
<span class="t" style="left:1597.30px;top:460.00px;font-size:14.4px;color:#3b3b42;transform:scaleX(1.0179);-webkit-text-stroke:0.3px #3b3b42;">bg</span>
<div class="a" style="left:1894.2px;top:462.59999999999997px;width:1.6px;height:1.6px;background:#34343c;border-radius:1px;"></div>
<div class="a" style="left:1894.2px;top:466.2px;width:1.6px;height:1.6px;background:#34343c;border-radius:1px;"></div>
<div class="a" style="left:1894.2px;top:469.8px;width:1.6px;height:1.6px;background:#34343c;border-radius:1px;"></div>
<span class="t" style="left:1597.30px;top:492.00px;font-size:14.4px;color:#3b3b42;transform:scaleX(0.9844);-webkit-text-stroke:0.3px #3b3b42;">NewSlider</span>
<div class="a" style="left:1894.2px;top:494.59999999999997px;width:1.6px;height:1.6px;background:#34343c;border-radius:1px;"></div>
<div class="a" style="left:1894.2px;top:498.2px;width:1.6px;height:1.6px;background:#34343c;border-radius:1px;"></div>
<div class="a" style="left:1894.2px;top:501.8px;width:1.6px;height:1.6px;background:#34343c;border-radius:1px;"></div>
<span class="t" style="left:1597.30px;top:524.00px;font-size:14.4px;color:#3b3b42;transform:scaleX(0.9738);-webkit-text-stroke:0.3px #3b3b42;">NewSlider2</span>
<div class="a" style="left:1894.2px;top:526.6px;width:1.6px;height:1.6px;background:#34343c;border-radius:1px;"></div>
<div class="a" style="left:1894.2px;top:530.2px;width:1.6px;height:1.6px;background:#34343c;border-radius:1px;"></div>
<div class="a" style="left:1894.2px;top:533.8000000000001px;width:1.6px;height:1.6px;background:#34343c;border-radius:1px;"></div>
<span class="t" style="left:1597.30px;top:556.00px;font-size:14.4px;color:#3b3b42;transform:scaleX(0.9738);-webkit-text-stroke:0.3px #3b3b42;">NewSlider3</span>
<div class="a" style="left:1894.2px;top:558.6px;width:1.6px;height:1.6px;background:#34343c;border-radius:1px;"></div>
<div class="a" style="left:1894.2px;top:562.2px;width:1.6px;height:1.6px;background:#34343c;border-radius:1px;"></div>
<div class="a" style="left:1894.2px;top:565.8000000000001px;width:1.6px;height:1.6px;background:#34343c;border-radius:1px;"></div>
<span class="t" style="left:1597.30px;top:588.00px;font-size:14.4px;color:#3b3b42;transform:scaleX(1.0356);-webkit-text-stroke:0.3px #3b3b42;">Bullet</span>
<div class="a" style="left:1894.2px;top:590.6px;width:1.6px;height:1.6px;background:#34343c;border-radius:1px;"></div>
<div class="a" style="left:1894.2px;top:594.2px;width:1.6px;height:1.6px;background:#34343c;border-radius:1px;"></div>
<div class="a" style="left:1894.2px;top:597.8000000000001px;width:1.6px;height:1.6px;background:#34343c;border-radius:1px;"></div>
<span class="t" style="left:1597.30px;top:620.00px;font-size:14.4px;color:#3b3b42;transform:scaleX(0.9836);-webkit-text-stroke:0.3px #3b3b42;">Ballz</span>
<div class="a" style="left:1894.2px;top:622.6px;width:1.6px;height:1.6px;background:#34343c;border-radius:1px;"></div>
<div class="a" style="left:1894.2px;top:626.2px;width:1.6px;height:1.6px;background:#34343c;border-radius:1px;"></div>
<div class="a" style="left:1894.2px;top:629.8000000000001px;width:1.6px;height:1.6px;background:#34343c;border-radius:1px;"></div>
<span class="t" style="left:1597.30px;top:652.00px;font-size:14.4px;color:#3b3b42;transform:scaleX(0.9091);-webkit-text-stroke:0.3px #3b3b42;">Coin1</span>
<div class="a" style="left:1894.2px;top:654.6px;width:1.6px;height:1.6px;background:#34343c;border-radius:1px;"></div>
<div class="a" style="left:1894.2px;top:658.2px;width:1.6px;height:1.6px;background:#34343c;border-radius:1px;"></div>
<div class="a" style="left:1894.2px;top:661.8000000000001px;width:1.6px;height:1.6px;background:#34343c;border-radius:1px;"></div>
<span class="t" style="left:1597.30px;top:684.00px;font-size:14.4px;color:#3b3b42;transform:scaleX(0.9489);-webkit-text-stroke:0.3px #3b3b42;">Coin2</span>
<div class="a" style="left:1894.2px;top:686.6px;width:1.6px;height:1.6px;background:#34343c;border-radius:1px;"></div>
<div class="a" style="left:1894.2px;top:690.2px;width:1.6px;height:1.6px;background:#34343c;border-radius:1px;"></div>
<div class="a" style="left:1894.2px;top:693.8000000000001px;width:1.6px;height:1.6px;background:#34343c;border-radius:1px;"></div>
<span class="t" style="left:1597.30px;top:716.00px;font-size:14.4px;color:#3b3b42;transform:scaleX(0.9489);-webkit-text-stroke:0.3px #3b3b42;">Coin3</span>
<div class="a" style="left:1894.2px;top:718.6px;width:1.6px;height:1.6px;background:#34343c;border-radius:1px;"></div>
<div class="a" style="left:1894.2px;top:722.2px;width:1.6px;height:1.6px;background:#34343c;border-radius:1px;"></div>
<div class="a" style="left:1894.2px;top:725.8000000000001px;width:1.6px;height:1.6px;background:#34343c;border-radius:1px;"></div>
<span class="t" style="left:1597.30px;top:748.00px;font-size:14.4px;color:#3b3b42;transform:scaleX(0.9489);-webkit-text-stroke:0.3px #3b3b42;">Coin4</span>
<div class="a" style="left:1894.2px;top:750.6px;width:1.6px;height:1.6px;background:#34343c;border-radius:1px;"></div>
<div class="a" style="left:1894.2px;top:754.2px;width:1.6px;height:1.6px;background:#34343c;border-radius:1px;"></div>
<div class="a" style="left:1894.2px;top:757.8000000000001px;width:1.6px;height:1.6px;background:#34343c;border-radius:1px;"></div>
<span class="t" style="left:1597.30px;top:780.00px;font-size:14.4px;color:#3b3b42;transform:scaleX(1.0203);-webkit-text-stroke:0.3px #3b3b42;">BloodEmitter</span>
<div class="a" style="left:1894.2px;top:782.6px;width:1.6px;height:1.6px;background:#34343c;border-radius:1px;"></div>
<div class="a" style="left:1894.2px;top:786.2px;width:1.6px;height:1.6px;background:#34343c;border-radius:1px;"></div>
<div class="a" style="left:1894.2px;top:789.8000000000001px;width:1.6px;height:1.6px;background:#34343c;border-radius:1px;"></div>
<span class="t" style="left:1597.30px;top:812.00px;font-size:14.4px;color:#3b3b42;transform:scaleX(0.9822);-webkit-text-stroke:0.3px #3b3b42;">LineLightJoystick</span>
<div class="a" style="left:1894.2px;top:814.6px;width:1.6px;height:1.6px;background:#34343c;border-radius:1px;"></div>
<div class="a" style="left:1894.2px;top:818.2px;width:1.6px;height:1.6px;background:#34343c;border-radius:1px;"></div>
<div class="a" style="left:1894.2px;top:821.8000000000001px;width:1.6px;height:1.6px;background:#34343c;border-radius:1px;"></div>
<span class="t" style="left:1597.30px;top:844.00px;font-size:14.4px;color:#33333a;transform:scaleX(0.9223);-webkit-text-stroke:0.3px #33333a;">Gun</span>
<div class="a" style="left:1894.2px;top:846.6px;width:1.6px;height:1.6px;background:#34343c;border-radius:1px;"></div>
<div class="a" style="left:1894.2px;top:850.2px;width:1.6px;height:1.6px;background:#34343c;border-radius:1px;"></div>
<div class="a" style="left:1894.2px;top:853.8000000000001px;width:1.6px;height:1.6px;background:#34343c;border-radius:1px;"></div>
<span class="t" style="left:1597.30px;top:876.00px;font-size:14.4px;color:#3b3b42;transform:scaleX(0.9370);-webkit-text-stroke:0.3px #3b3b42;">Gun2</span>
<div class="a" style="left:1894.2px;top:878.6px;width:1.6px;height:1.6px;background:#34343c;border-radius:1px;"></div>
<div class="a" style="left:1894.2px;top:882.2px;width:1.6px;height:1.6px;background:#34343c;border-radius:1px;"></div>
<div class="a" style="left:1894.2px;top:885.8000000000001px;width:1.6px;height:1.6px;background:#34343c;border-radius:1px;"></div>
<span class="t" style="left:1597.30px;top:908.00px;font-size:14.4px;color:#3b3b42;transform:scaleX(0.9370);-webkit-text-stroke:0.3px #3b3b42;">Gun3</span>
<div class="a" style="left:1894.2px;top:910.6px;width:1.6px;height:1.6px;background:#34343c;border-radius:1px;"></div>
<div class="a" style="left:1894.2px;top:914.2px;width:1.6px;height:1.6px;background:#34343c;border-radius:1px;"></div>
<div class="a" style="left:1894.2px;top:917.8000000000001px;width:1.6px;height:1.6px;background:#34343c;border-radius:1px;"></div>
<span class="t" style="left:1597.30px;top:940.00px;font-size:14.4px;color:#3b3b42;transform:scaleX(0.9796);-webkit-text-stroke:0.3px #3b3b42;">Hourglass</span>
<div class="a" style="left:1894.2px;top:942.6px;width:1.6px;height:1.6px;background:#34343c;border-radius:1px;"></div>
<div class="a" style="left:1894.2px;top:946.2px;width:1.6px;height:1.6px;background:#34343c;border-radius:1px;"></div>
<div class="a" style="left:1894.2px;top:949.8000000000001px;width:1.6px;height:1.6px;background:#34343c;border-radius:1px;"></div>
<span class="t" style="left:1597.30px;top:972.00px;font-size:14.4px;color:#3b3b42;transform:scaleX(0.9427);-webkit-text-stroke:0.3px #3b3b42;">Sand</span>
<div class="a" style="left:1894.2px;top:974.6px;width:1.6px;height:1.6px;background:#34343c;border-radius:1px;"></div>
<div class="a" style="left:1894.2px;top:978.2px;width:1.6px;height:1.6px;background:#34343c;border-radius:1px;"></div>
<div class="a" style="left:1894.2px;top:981.8000000000001px;width:1.6px;height:1.6px;background:#34343c;border-radius:1px;"></div>
<div class="a" style="left:1911px;top:494px;width:6px;height:474px;background:#19191d;border-radius:3px;"></div>
<div class="a" style="left:1300px;top:1010px;width:223px;height:31.5px;background:#0b0622;border-radius:7px;"></div>
<svg class="a" style="left:1350px;top:1018px;" width="16" height="16" viewBox="0 0 16 16"><path d="M8 1.5999999999999996V14.4M1.5999999999999996 8H14.4" stroke="#2a2838" stroke-width="1.3" stroke-linecap="round"/></svg>
<span class="t" style="left:1379.00px;top:1019.00px;font-size:13px;color:#2c2a3a;font-weight:bold;transform:scaleX(0.9104);">Add a new group</span>
<div class="a" style="left:1543px;top:1010px;width:367px;height:31.6px;border-radius:7px;background:linear-gradient(90deg,#0b0622 0,#120b34 30%,#120b34 100%);"></div>
<svg class="a" style="left:1665px;top:1018px;" width="16" height="16" viewBox="0 0 16 16"><path d="M8 1.4000000000000004V14.6M1.4000000000000004 8H14.6" stroke="#3a3848" stroke-width="1.4" stroke-linecap="round"/></svg>
<span class="t" style="left:1693.00px;top:1019.00px;font-size:13px;color:#3a3848;font-weight:bold;transform:scaleX(0.9223);">Add a new object</span>
<div class="a" style="left:300px;top:1018px;width:1000px;height:32px;background:#050507;"></div>
<span class="t" style="left:330.50px;top:1010.00px;font-size:14.4px;color:#1b1b1f;transform:scaleX(0.8841);">MMXBig</span>
<span class="t" style="left:330.50px;top:1042.00px;font-size:14.4px;color:#1b1b1f;transform:scaleX(0.8556);">Wall</span>
<span class="t" style="left:705.00px;top:1011.00px;font-size:13.6px;color:#1b1b1f;">0</span>
<span class="t" style="left:705.00px;top:1043.00px;font-size:13.6px;color:#1b1b1f;">560</span>
<span class="t" style="left:806.50px;top:1011.00px;font-size:13.6px;color:#1b1b1f;">112</span>
<span class="t" style="left:806.50px;top:1043.00px;font-size:13.6px;color:#1b1b1f;">240</span>
<span class="t" style="left:905.00px;top:1011.00px;font-size:13.6px;color:#1b1b1f;">0</span>
<span class="t" style="left:905.00px;top:1043.00px;font-size:13.6px;color:#1b1b1f;">0</span>
<span class="t" style="left:1190.00px;top:1011.00px;font-size:13.6px;color:#1b1b1f;">1</span>
<span class="t" style="left:1190.00px;top:1043.00px;font-size:13.6px;color:#1b1b1f;">1</span>
<svg class="a" style="left:660px;top:1011px;" width="14" height="12" viewBox="0 0 14 12"><rect x="1" y="4.6" width="11.6" height="6.6" rx="1.6" fill="none" stroke="#1b1b1f" stroke-width="1.2"/></svg>
<svg class="a" style="left:660px;top:1040px;" width="14" height="14" viewBox="0 0 14 14"><path d="M2.6 6V4.6Q2.6 1 6.6 1Q9.4 1 10.2 2.6" fill="none" stroke="#1b1b1f" stroke-width="1.2"/><rect x="1" y="6.4" width="11.6" height="6.6" rx="1.6" fill="none" stroke="#1b1b1f" stroke-width="1.2"/></svg>
<div class="a" style="left:320px;top:32px;width:1280px;height:986px;background:#25252e;border-radius:9px;"></div>
<div class="a" style="left:346px;top:128px;width:817px;height:810px;background-color:#1f2428;background-image:conic-gradient(#1f2428 25%,#313943 0 50%,#1f2428 0 75%,#313943 0);background-size:16px 16px;background-position:0 0;"></div>
<span class="t" style="left:343.80px;top:51.00px;font-size:25.5px;color:#ffffff;font-weight:bold;transform:scaleX(0.9321);">Edit points</span>
<svg class="a" style="left:1550px;top:52px;" width="22" height="22" viewBox="0 0 22 22"><path d="M4.2 4.2L17.8 17.8M17.8 4.2L4.2 17.8" stroke="#e6e0f6" stroke-width="1.5" stroke-linecap="round" fill="none"/></svg>
<svg class="a" style="left:360px;top:101px;" width="22" height="22" viewBox="0 0 22 22"><circle cx="9" cy="9" r="6.3" fill="none" stroke="#dcd4f4" stroke-width="1.4"/><path d="M13.6 13.8L17.6 17.9" stroke="#dcd4f4" stroke-width="1.4" stroke-linecap="round"/><path d="M6.4 9H11.6" stroke="#dcd4f4" stroke-width="1.6" stroke-linecap="round"/></svg>
<div class="a" style="left:404px;top:110.9px;width:150px;height:2.2px;background:#7b7592;border-radius:1px;"></div>
<div class="a" style="left:472.7px;top:105.7px;width:12.6px;height:12.6px;border-radius:50%;background:#e3dbfb;"></div>
<svg class="a" style="left:578px;top:101px;" width="22" height="22" viewBox="0 0 22 22"><circle cx="9" cy="9" r="6.3" fill="none" stroke="#dcd4f4" stroke-width="1.4"/><path d="M13.6 13.8L17.6 17.9" stroke="#dcd4f4" stroke-width="1.4" stroke-linecap="round"/><path d="M6.4 9H11.6M9 6.4V11.6" stroke="#dcd4f4" stroke-width="1.6" stroke-linecap="round"/></svg>
<svg class="a" style="left:626px;top:102px;" width="20" height="20" viewBox="0 0 20 20"><path d="M3.2 7V5.4Q3.2 3.2 5.4 3.2H7M13 3.2H14.6Q16.8 3.2 16.8 5.4V7M16.8 13V14.6Q16.8 16.8 14.6 16.8H13M7 16.8H5.4Q3.2 16.8 3.2 14.6V13" fill="none" stroke="#dcd4f4" stroke-width="1.5" stroke-linecap="round"/></svg>
<div class="a" style="left:1175px;top:112px;width:192px;height:48px;background:#393942;border-radius:4px 4px 0 0;"></div>
<div class="a" style="left:1175px;top:159px;width:192px;height:1.3px;background:#dcdce2;"></div>
<span class="t" style="left:1187.00px;top:119.00px;font-size:12.4px;color:#b9b9c2;transform:scaleX(1.0064);-webkit-text-stroke:0.2px #b9b9c2;">Animation</span>
<span class="t" style="left:1187.00px;top:137.00px;font-size:15.8px;color:#f4f4f6;transform:scaleX(1.0411);-webkit-text-stroke:0.3px #f4f4f6;">Animation #0</span>
<svg class="a" style="left:1341px;top:129px;" width="14" height="14" viewBox="0 0 14 14"><path d="M3.2 5.2L7 9L10.8 5.2" fill="none" stroke="#f0f0f4" stroke-width="1.5" stroke-linecap="round" stroke-linejoin="round"/></svg>
<div class="a" style="left:1375px;top:112px;width:191px;height:48px;background:#393942;border-radius:4px 4px 0 0;"></div>
<div class="a" style="left:1375px;top:159px;width:191px;height:1.3px;background:#dcdce2;"></div>
<span class="t" style="left:1387.00px;top:119.00px;font-size:12.4px;color:#b9b9c2;transform:scaleX(0.9210);-webkit-text-stroke:0.2px #b9b9c2;">Frame</span>
<span class="t" style="left:1387.00px;top:137.00px;font-size:15.8px;color:#f4f4f6;transform:scaleX(0.9614);-webkit-text-stroke:0.3px #f4f4f6;">Frame #0</span>
<svg class="a" style="left:1540px;top:129px;" width="14" height="14" viewBox="0 0 14 14"><path d="M3.2 5.2L7 9L10.8 5.2" fill="none" stroke="#f0f0f4" stroke-width="1.5" stroke-linecap="round" stroke-linejoin="round"/></svg>
<div class="a" style="left:1176px;top:181px;width:34px;height:12px;border-radius:6px;background:linear-gradient(90deg,#6a47ea 0%,#6f4def 45%,#8a74e0 100%);"></div>
<div class="a" style="left:1193px;top:177px;width:20px;height:20px;border-radius:50%;background:#ddd5f9;"></div>
<span class="t" style="left:1222.30px;top:179.00px;font-size:14.6px;color:#f2f2f4;transform:scaleX(1.0101);-webkit-text-stroke:0.35px #f2f2f4;">Share same points for all animations</span>
<div class="a" style="left:1176px;top:219px;width:34px;height:12px;border-radius:6px;background:linear-gradient(90deg,#6a47ea 0%,#6f4def 45%,#8a74e0 100%);"></div>
<div class="a" style="left:1193px;top:215px;width:20px;height:20px;border-radius:50%;background:#ddd5f9;"></div>
<span class="t" style="left:1222.30px;top:217.00px;font-size:14.6px;color:#f2f2f4;transform:scaleX(1.0183);-webkit-text-stroke:0.35px #f2f2f4;">Share same points for all sprites of this animation</span>
<div class="a" style="left:1567px;top:253px;width:5.6px;height:682px;background:#222229;border-radius:3px;"></div>
<span class="t" style="left:1191.50px;top:260.00px;font-size:13.4px;color:#f2f2f4;transform:scaleX(1.0622);-webkit-text-stroke:0.45px #f2f2f4;">Point name</span>
<span class="t" style="left:1336.30px;top:260.00px;font-size:13.4px;color:#f2f2f4;transform:scaleX(0.9735);-webkit-text-stroke:0.45px #f2f2f4;">X</span>
<span class="t" style="left:1420.00px;top:260.00px;font-size:13.4px;color:#f2f2f4;transform:scaleX(0.9623);-webkit-text-stroke:0.45px #f2f2f4;">Y</span>
<div class="a" style="left:1175px;top:284.4px;width:383px;height:33px;background:#31313a;"></div>
<div class="a" style="left:1175px;top:317.4px;width:383px;height:33px;background:#3f4351;"></div>
<div class="a" style="left:1175px;top:350.4px;width:383px;height:33px;background:#31313a;"></div>
<div class="a" style="left:1175px;top:284.0px;width:383px;height:1px;background:#4b4b52;"></div>
<div class="a" style="left:1175px;top:317.0px;width:383px;height:1px;background:#4b4b52;"></div>
<div class="a" style="left:1175px;top:350.0px;width:383px;height:1px;background:#4b4b52;"></div>
<div class="a" style="left:1175px;top:383.0px;width:383px;height:1px;background:#4b4b52;"></div>
<span class="t" style="left:1191.50px;top:291.00px;font-size:16.2px;color:#8f8f9a;transform:scaleX(0.9927);-webkit-text-stroke:0.3px #8f8f9a;">Origin</span>
<div class="a" style="left:1191px;top:311.2px;width:113px;height:1px;background-image:linear-gradient(90deg,#c8c8d0 50%,transparent 0);background-size:2px 1px;"></div>
<span class="t" style="left:1336.30px;top:291.00px;font-size:16.2px;color:#f2f2f4;transform:scaleX(0.9877);-webkit-text-stroke:0.3px #f2f2f4;">3</span>
<div class="a" style="left:1336px;top:311.2px;width:68px;height:1.2px;background:#dedee4;"></div>
<span class="t" style="left:1420.30px;top:291.00px;font-size:16.2px;color:#f2f2f4;transform:scaleX(0.8323);-webkit-text-stroke:0.3px #f2f2f4;">13</span>
<div class="a" style="left:1420px;top:311.2px;width:68px;height:1.2px;background:#dedee4;"></div>
<span class="t" style="left:1191.50px;top:324.00px;font-size:16.2px;color:#f2f2f4;transform:scaleX(0.9665);-webkit-text-stroke:0.3px #f2f2f4;">Center</span>
<div class="a" style="left:1191px;top:344.0px;width:113px;height:1px;background-image:linear-gradient(90deg,#c8c8d0 50%,transparent 0);background-size:2px 1px;"></div>
<span class="t" style="left:1336.30px;top:324.00px;font-size:16.2px;color:#f2f2f4;transform:scaleX(0.9877);-webkit-text-stroke:0.3px #f2f2f4;">3</span>
<div class="a" style="left:1336px;top:344.0px;width:68px;height:1.2px;background:#dedee4;"></div>
<span class="t" style="left:1420.30px;top:324.00px;font-size:16.2px;color:#f2f2f4;transform:scaleX(0.8323);-webkit-text-stroke:0.3px #f2f2f4;">13</span>
<div class="a" style="left:1420px;top:344.0px;width:68px;height:1.2px;background:#dedee4;"></div>
<span class="t" style="left:1191.50px;top:357.00px;font-size:16.2px;color:#f2f2f4;transform:scaleX(1.0585);-webkit-text-stroke:0.3px #f2f2f4;">Bullet</span>
<div class="a" style="left:1191px;top:377.0px;width:113px;height:1.2px;background:#dedee4;"></div>
<span class="t" style="left:1336.30px;top:357.00px;font-size:16.2px;color:#f2f2f4;transform:scaleX(0.8711);-webkit-text-stroke:0.3px #f2f2f4;">16</span>
<div class="a" style="left:1336px;top:377.0px;width:68px;height:1.2px;background:#dedee4;"></div>
<span class="t" style="left:1420.30px;top:357.00px;font-size:16.2px;color:#f2f2f4;transform:scaleX(0.9877);-webkit-text-stroke:0.3px #f2f2f4;">6</span>
<div class="a" style="left:1420px;top:377.0px;width:68px;height:1.2px;background:#dedee4;"></div>
<svg class="a" style="left:1518px;top:324px;" width="18" height="20" viewBox="0 0 18 20"><path d="M2.6 5.6H15.4M6.6 5.4Q6.6 2.4 9 2.4Q11.4 2.4 11.4 5.4M4 5.8L4.9 16Q5.05 17.6 6.6 17.6H11.4Q12.95 17.6 13.1 16L14 5.8" fill="none" stroke="#dcd4f4" stroke-width="1.4" stroke-linecap="round" stroke-linejoin="round"/></svg>
<svg class="a" style="left:1518px;top:357.3px;" width="18" height="20" viewBox="0 0 18 20"><path d="M2.6 5.6H15.4M6.6 5.4Q6.6 2.4 9 2.4Q11.4 2.4 11.4 5.4M4 5.8L4.9 16Q5.05 17.6 6.6 17.6H11.4Q12.95 17.6 13.1 16L14 5.8" fill="none" stroke="#dcd4f4" stroke-width="1.4" stroke-linecap="round" stroke-linejoin="round"/></svg>
<div class="a" style="left:1308px;top:400.5px;width:118px;height:31.2px;background:#4b25cd;border-radius:8px;"></div>
<svg class="a" style="left:1322px;top:408px;" width="16" height="16" viewBox="0 0 16 16"><path d="M8 1.6V14.4M1.6 8H14.4" stroke="#fff" stroke-width="1.5" stroke-linecap="round"/></svg>
<span class="t" style="left:1349.40px;top:409.00px;font-size:13.4px;color:#ffffff;font-weight:bold;transform:scaleX(0.8984);">Add a point</span>
<svg class="a" style="left:351px;top:968px;" width="20" height="20" viewBox="0 0 20 20"><circle cx="10" cy="10" r="7.7" fill="none" stroke="#fff" stroke-width="1.5"/><path d="M7.7 8.2Q7.8 5.9 10 5.9Q12.3 5.9 12.3 7.9Q12.3 9.1 11 9.8Q10 10.4 10 11.6" fill="none" stroke="#fff" stroke-width="1.4" stroke-linecap="round"/><circle cx="10" cy="14" r="0.95" fill="#fff"/></svg>
<span class="t" style="left:381.00px;top:972.00px;font-size:12.6px;color:#ffffff;font-weight:bold;transform:scaleX(0.9522);">Help</span>
<div class="a" style="left:1512px;top:964px;width:64px;height:29px;background:#4e28cd;border-radius:8px;"></div>
<span class="t" style="left:1527.30px;top:972.00px;font-size:12.6px;color:#ffffff;font-weight:bold;transform:scaleX(0.9427);">Apply</span>
<svg class="a" style="left:371px;top:149px;shape-rendering:crispEdges;" width="768" height="768" viewBox="0 0 768 768"><rect x="144" y="144" width="48" height="48" fill="#000000"/><rect x="240" y="144" width="48" height="48" fill="#000000"/><rect x="336" y="144" width="48" height="48" fill="#000000"/><rect x="672" y="144" width="48" height="48" fill="#000000"/><rect x="96" y="192" width="48" height="48" fill="#000000"/><rect x="144" y="192" width="48" height="48" fill="#ffdfab"/><rect x="192" y="192" width="48" height="48" fill="#000000"/><rect x="240" y="192" width="48" height="48" fill="#ffdfab"/><rect x="288" y="192" width="48" height="48" fill="#000000"/><rect x="336" y="192" width="48" height="48" fill="#ffdfab"/><rect x="384" y="192" width="288" height="48" fill="#000000"/><rect x="672" y="192" width="48" height="48" fill="#ffdfab"/><rect x="720" y="192" width="48" height="48" fill="#000000"/><rect x="48" y="240" width="48" height="48" fill="#000000"/><rect x="96" y="240" width="144" height="48" fill="#ffdfab"/><rect x="240" y="240" width="48" height="48" fill="#000000"/><rect x="288" y="240" width="48" height="48" fill="#ffdfab"/><rect x="336" y="240" width="48" height="48" fill="#000000"/><rect x="384" y="240" width="144" height="48" fill="#ffdfab"/><rect x="528" y="240" width="48" height="48" fill="#00b4cc"/><rect x="576" y="240" width="48" height="48" fill="#ffdfab"/><rect x="624" y="240" width="48" height="48" fill="#00b4cc"/><rect x="672" y="240" width="48" height="48" fill="#ffa71a"/><rect x="720" y="240" width="48" height="48" fill="#000000"/><rect x="48" y="288" width="48" height="48" fill="#000000"/><rect x="96" y="288" width="96" height="48" fill="#ffa71a"/><rect x="192" y="288" width="48" height="48" fill="#000000"/><rect x="240" y="288" width="48" height="48" fill="#ffa71a"/><rect x="288" y="288" width="48" height="48" fill="#000000"/><rect x="336" y="288" width="384" height="48" fill="#ffa71a"/><rect x="720" y="288" width="48" height="48" fill="#000000"/><rect x="48" y="336" width="48" height="48" fill="#000000"/><rect x="96" y="336" width="192" height="48" fill="#ffa71a"/><rect x="288" y="336" width="480" height="48" fill="#000000"/><rect x="96" y="384" width="96" height="48" fill="#000000"/><rect x="192" y="384" width="96" height="48" fill="#855a17"/><rect x="288" y="384" width="48" height="48" fill="#000000"/><rect x="336" y="384" width="384" height="48" fill="#d40000"/><rect x="720" y="384" width="48" height="48" fill="#000000"/><rect x="96" y="432" width="48" height="48" fill="#000000"/><rect x="144" y="432" width="48" height="48" fill="#ffdfab"/><rect x="192" y="432" width="144" height="48" fill="#000000"/><rect x="336" y="432" width="384" height="48" fill="#500000"/><rect x="720" y="432" width="48" height="48" fill="#000000"/><rect x="48" y="480" width="48" height="48" fill="#000000"/><rect x="96" y="480" width="96" height="48" fill="#ffa71a"/><rect x="192" y="480" width="96" height="48" fill="#000000"/><rect x="336" y="480" width="384" height="48" fill="#000000"/><rect x="48" y="528" width="48" height="48" fill="#000000"/><rect x="96" y="528" width="96" height="48" fill="#ffa71a"/><rect x="192" y="528" width="48" height="48" fill="#000000"/><rect x="288" y="528" width="96" height="48" fill="#000000"/><rect x="48" y="576" width="48" height="48" fill="#000000"/><rect x="96" y="576" width="96" height="48" fill="#ffa71a"/><rect x="192" y="576" width="144" height="48" fill="#000000"/><rect x="0" y="624" width="48" height="48" fill="#000000"/><rect x="48" y="624" width="48" height="48" fill="#855a17"/><rect x="96" y="624" width="96" height="48" fill="#ffa71a"/><rect x="192" y="624" width="48" height="48" fill="#000000"/><rect x="0" y="672" width="48" height="48" fill="#000000"/><rect x="48" y="672" width="144" height="48" fill="#855a17"/><rect x="192" y="672" width="48" height="48" fill="#000000"/><rect x="48" y="720" width="144" height="48" fill="#000000"/></svg>
<svg class="a" style="left:366px;top:145px;" width="778" height="778" viewBox="0 0 778 778"><rect x="4.4" y="3.8" width="768.8" height="768.9" fill="none" stroke="#d3d9e8" stroke-width="1.15"/></svg>
<svg class="a" style="left:505px;top:763px;" width="20" height="20" viewBox="0 0 20 20"><circle cx="10" cy="10" r="7" fill="#a8a0ba"/><path d="M3 10H17M10 3V17" stroke="#a9c2f2" stroke-width="2"/></svg>
<svg class="a" style="left:1129px;top:427px;" width="20" height="20" viewBox="0 0 20 20"><circle cx="10" cy="10.1" r="7" fill="#b3675a"/><path d="M3 10.1H17M10 3.1V17.1" stroke="#f2ac9c" stroke-width="2"/></svg>
<svg class="a" style="left:0px;top:0px;pointer-events:none;" width="1920" height="1080" viewBox="0 0 1920 1080"><rect x="1154.5" y="273.4" width="355" height="76.9" fill="none" stroke="#ffff00" stroke-width="4.3"/><rect x="1174.4" y="354.6" width="317.4" height="42.9" fill="none" stroke="#ffff00" stroke-width="4.3"/><path d="M1135.7 341.5L541.5 759.0" stroke="#ffff00" stroke-width="4.0" stroke-linecap="round" fill="none"/><path d="M533.7 764.3L539.6 751.9L542.6 758.2L547.2 761.7Z" fill="#ffff00" stroke="#ffff00" stroke-width="1.5" stroke-linejoin="round"/><path d="M1173 389.6L1158 416.5" stroke="#ffff00" stroke-width="3.4" stroke-linecap="round" fill="none"/><path d="M1154.9 421.2L1153.5 408.2L1158.2 413.6L1166.6 412.8Z" fill="#ffff00" stroke="#ffff00" stroke-width="1.5" stroke-linejoin="round"/></svg>
<div class="a" style="left:1783px;top:0px;width:137px;height:23px;background:#1e1e27;"></div>
<svg class="a" style="left:1783px;top:0px;" width="137" height="23" viewBox="0 0 137 23"><g fill="none" stroke="#ffffff" stroke-width="1.1"><path d="M17 11.5H27"/><rect x="62.5" y="8.5" width="7.6" height="7.6"/><path d="M64.8 8.5V6.3H72.4V13.9H70.2"/><path d="M108.6 6.2L118.8 16.4M118.8 6.2L108.6 16.4" stroke-width="1.2"/></g></svg>
<div class="a" style="left:0px;top:1050px;width:1920px;height:30px;background:#1c1c1c;"></div>
<div class="a" style="left:361px;top:1050px;width:160px;height:30px;background:#323232;"></div>
<div class="a" style="left:43px;top:1078px;width:152px;height:2px;background:#a9a9a9;"></div>
<div class="a" style="left:204px;top:1078px;width:152px;height:2px;background:#a9a9a9;"></div>
<div class="a" style="left:361px;top:1078px;width:160px;height:2px;background:#b4b4b4;"></div>
<svg class="a" style="left:10px;top:1056px;" width="17" height="17" viewBox="0 0 17 17"><g fill="#ffffff"><path d="M0 2.4L7 1.4V8H0Z"/><path d="M8 1.25L16.6 0V8H8Z"/><path d="M0 9H7V15.6L0 14.6Z"/><path d="M8 9H16.6V17L8 15.75Z"/></g></svg>
<svg class="a" style="left:46px;top:1056px;" width="18" height="18" viewBox="0 0 18 18"><path d="M2 11L12.6 1.2L10.2 7.4L16.4 6.2L5 16.8L8 10.2Z" fill="#f0a020" stroke="#7a5a30" stroke-width="0.8" stroke-linejoin="round"/><path d="M4 10.6L11 4.2L9 8.6L13.6 7.6" fill="none" stroke="#ffd98a" stroke-width="0.8"/></svg>
<span class="t" style="left:67.00px;top:1059.00px;font-size:12.6px;color:#ffffff;transform:scaleX(0.9119);">2507. Sword of Mana ...</span>
<svg class="a" style="left:207px;top:1056px;" width="18" height="18" viewBox="0 0 18 18"><circle cx="9" cy="9" r="7.4" fill="none" stroke="#e8174a" stroke-width="1.1" stroke-dasharray="2.2 0.9"/><ellipse cx="9" cy="9" rx="3.4" ry="5.6" fill="none" stroke="#c4143e" stroke-width="0.9"/></svg>
<span class="t" style="left:228.00px;top:1059.00px;font-size:12.6px;color:#ffffff;transform:scaleX(0.9404);">Position of the Weap...</span>
<svg class="a" style="left:368px;top:1058px;" width="18" height="16" viewBox="0 0 18 16"><path d="M16.6 2.9H8.4Q5.4 2.9 5.4 5.9V7.6Q5.4 10.4 8.4 10.4H12.3L13.4 6.2H9.2" fill="none" stroke="#f0101c" stroke-width="1.9" stroke-linejoin="round" stroke-linecap="butt"/><path d="M1.5 5.2Q1.2 12.7 8.6 12.7H15.4" fill="none" stroke="#e8000e" stroke-width="1.9" stroke-linecap="round"/></svg>
<span class="t" style="left:389.00px;top:1059.00px;font-size:12.6px;color:#ffffff;transform:scaleX(0.9233);">GDevelop 5 - E:\Progr...</span>
<div class="a" style="left:1693px;top:1057px;width:16px;height:16px;border-radius:2px;background:linear-gradient(180deg,#5a0008 0,#b00010 55%,#7a000a 100%);"></div>
<div class="a" style="left:1698.5px;top:1059.5px;width:5.4px;height:10.6px;border-radius:1px;border:1.2px solid #ffffff;box-sizing:border-box;"></div>
<svg class="a" style="left:1735px;top:1057.5px;" width="18" height="16" viewBox="0 0 18 16"><path d="M16.6 2.9H8.4Q5.4 2.9 5.4 5.9V7.6Q5.4 10.4 8.4 10.4H12.3L13.4 6.2H9.2" fill="none" stroke="#f0101c" stroke-width="1.9" stroke-linejoin="round" stroke-linecap="butt"/><path d="M1.5 5.2Q1.2 12.7 8.6 12.7H15.4" fill="none" stroke="#e8000e" stroke-width="1.9" stroke-linecap="round"/></svg>
<svg class="a" style="left:1808px;top:1059px;" width="16" height="12" viewBox="0 0 16 12"><path d="M2 9L8 3L14 9" fill="none" stroke="#ffffff" stroke-width="1.4"/></svg>
<svg class="a" style="left:1831px;top:1057px;" width="18" height="16" viewBox="0 0 18 16"><path d="M4.2 2.2Q2.6 2.2 2.2 4L0.8 11Q0.6 13.4 2.4 13.6Q3.6 13.6 4.4 12.2L5.6 10.4H12.4L13.6 12.2Q14.4 13.6 15.6 13.6Q17.4 13.4 17.2 11L15.8 4Q15.4 2.2 13.8 2.2Q12.6 2.2 12 3.2H6Q5.4 2.2 4.2 2.2Z" fill="#d0d0d0"/><circle cx="5.6" cy="6.4" r="1.3" fill="#333"/><circle cx="12.4" cy="6.4" r="1.3" fill="#333"/><path d="M6.4 9Q9 10.4 11.6 9" stroke="#444" stroke-width="0.8" fill="none"/></svg>
<div class="a" style="left:1856px;top:1057px;width:16px;height:16px;background:#12a5b8;border-radius:2px;"></div>
<svg class="a" style="left:1856px;top:1057px;" width="16" height="16" viewBox="0 0 16 16"><path d="M2.2 5.6H4.4L7 3.2V12.8L4.4 10.4H2.2Z" fill="#d9f3f7"/><path d="M9 3.2L12.4 8L9 12.8" fill="none" stroke="#d9f3f7" stroke-width="1.5"/></svg>
<span class="t" style="left:1882.00px;top:1060.00px;font-size:12.4px;color:#ffffff;transform:scaleX(0.8603);">08:03</span>
<div class="a" style="left:1915px;top:1050px;width:1px;height:30px;background:#6a6a6a;"></div>
</body></html>
